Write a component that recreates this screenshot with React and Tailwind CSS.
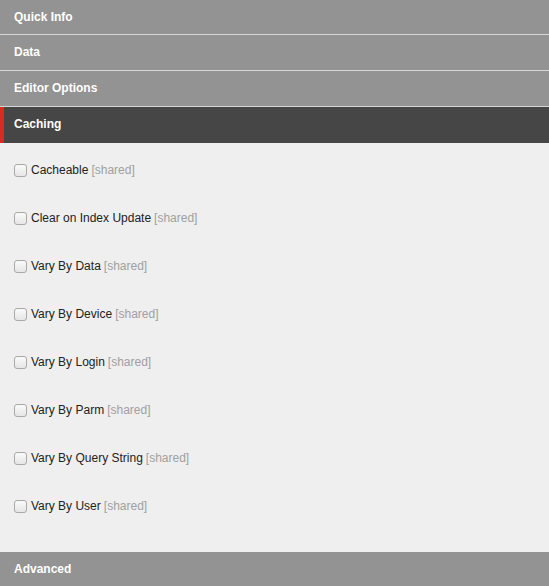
import React from "react";

const items = [
  "Cacheable",
  "Clear on Index Update",
  "Vary By Data",
  "Vary By Device",
  "Vary By Login",
  "Vary By Parm",
  "Vary By Query String",
  "Vary By User",
];

function Header({ label, h }) {
  return (
    <div className={"shrink-0 flex items-center px-[14px] text-[12px] font-bold text-white bg-[#939393] " + h}>
      {label}
    </div>
  );
}

export default function App() {
  return (
    <div
      className="w-[549px] h-[586px] overflow-hidden bg-[#efefef] flex flex-col"
      style={{ fontFamily: '"Liberation Sans", Arial, sans-serif' }}
    >
      <Header label="Quick Info" h="h-[34px]" />
      <div className="h-px shrink-0 bg-[#d6d6d6]" />
      <Header label="Data" h="h-[35px] pb-[2px]" />
      <div className="h-px shrink-0 bg-[#d6d6d6]" />
      <Header label="Editor Options" h="h-[35px] pb-[2px]" />
      <div className="h-px shrink-0 bg-[#d6d6d6]" />
      <div className="h-[36px] pb-[2px] shrink-0 relative flex items-center px-[14px] text-[12px] font-bold text-white bg-[#464646]">
        <div className="absolute left-0 top-0 bottom-0 w-[4px] bg-[#d92b1f]" />
        Caching
      </div>
      <div className="shrink-0 flex flex-col pt-[3px] pb-[22px] bg-[#efefef]">
        {items.map((t) => (
          <div key={t} className="h-12 flex items-center pl-[14px] text-[12px]">
            <span className="w-[13px] h-[13px] rounded-[3px] border border-[#a9a9a9] bg-gradient-to-b from-[#fafafa] to-[#e6e6e6] mr-[4px] shrink-0" />
            <span className="text-[#222]">{t}</span>
            <span className="text-[#a0a0a0] ml-[3px]">[shared]</span>
          </div>
        ))}
      </div>
      <div className="h-[35px] pb-[2px] shrink-0 flex items-center px-[14px] text-[12px] font-bold text-white bg-[#939393]">
        Advanced
      </div>
    </div>
  );
}
